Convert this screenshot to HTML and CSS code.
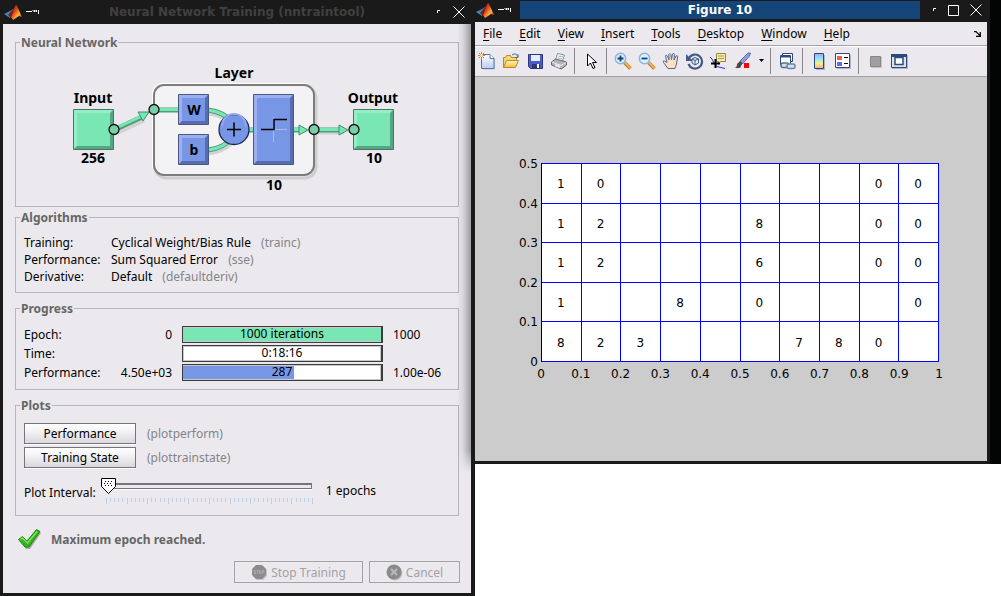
FILE: index.html
```html
<!DOCTYPE html>
<html lang="en">
<head>
<meta charset="utf-8">
<title>Neural Network Training (nntraintool)</title>
<link rel="stylesheet" href="styles.css">
</head>
<body>
<svg class="defs" aria-hidden="true">
  <defs>
    <linearGradient id="flame" x1="0" y1="0" x2="1" y2="1"><stop offset="0" stop-color="#6b1c10"/><stop offset=".4" stop-color="#e0481c"/><stop offset=".65" stop-color="#f9b233"/><stop offset="1" stop-color="#a8240e"/></linearGradient>
    <linearGradient id="cool" x1="0" y1="0" x2="0" y2="1"><stop offset="0" stop-color="#fff"/><stop offset="1" stop-color="#b9cdec"/></linearGradient>
    <linearGradient id="rainbow" x1="0" y1="0" x2="0" y2="1"><stop offset="0" stop-color="#a6a4f4"/><stop offset=".35" stop-color="#8fe6f4"/><stop offset=".65" stop-color="#f3f08c"/><stop offset="1" stop-color="#f6a98e"/></linearGradient>
    <linearGradient id="gold" x1="0" y1="0" x2="0" y2="1"><stop offset="0" stop-color="#fff6bd"/><stop offset="1" stop-color="#f0bd3c"/></linearGradient>
    <symbol id="matlab" viewBox="0 0 20 20">
      <path d="M1 12 7 9l3-2 1 3-4 6z" fill="#3f87c2"/>
      <path d="M5 13 10 7 13 3l-3 9-2 4z" fill="#7c2013"/>
      <path d="M13 3c1 0 3 6 6 12l-3-1-3 2-3 2-2-3c2-2 3-10 5-12z" fill="url(#flame)"/>
    </symbol>
    <symbol id="pin" viewBox="0 0 14 8"><path d="M0 3.500h6M6.500 2l2 2v-2l2 2v-2M12.500 2v4" fill="none" stroke="#fff"/></symbol>
    <symbol id="corner" viewBox="0 0 4 4"><path d="M.5 3V.5H3" fill="none" stroke="#fff"/></symbol>
    <symbol id="cross" viewBox="0 0 12 12"><path d="m.5.5 11 11m0-11-11 11" fill="none" stroke="#fff"/></symbol>
  </defs>
</svg>

<div class="desktop">
  <section class="window trainer" aria-label="Neural Network Training">
    <header class="titlebar">
      <div class="title-side"><svg width="20" height="20"><use href="#matlab"/></svg><svg width="14" height="8"><use href="#pin"/></svg></div>
      <h1>Neural Network Training (nntraintool)</h1>
      <div class="title-side end">
        <button type="button" aria-label="Minimize"><svg width="4" height="4"><use href="#corner"/></svg></button>
        <button type="button" aria-label="Close"><svg width="12" height="12"><use href="#cross"/></svg></button>
      </div>
    </header>
    <main class="trainer-body">
      <fieldset class="network">
        <legend>Neural Network</legend>
        <svg class="diagram" viewBox="65 60 344 136" width="344" height="136" role="img" aria-label="Network diagram">
          <rect x="155" y="87" width="161" height="91" rx="11" fill="none" stroke="#cfcdd0" stroke-width="3"/>
          <rect x="154" y="85" width="160" height="90" rx="10" fill="#f3f3f5" stroke="#7c7c7c" stroke-width="2"/>
          <path d="M152.500 168V93q1-8 9-9.500h146" fill="none" stroke="#fff"/>
          <g fill="none" stroke="#d5d2d6" stroke-width="5">
            <path d="m116 133 28-13M316 132h28M209 113q14 2 22 10M209 153q14-2 22-10"/>
          </g>
          <g fill="none" stroke="#4f9f7d" stroke-width="5">
            <path d="m114 130 28-13M154 110h26M208 110q16 2 24 12M208 150q16-2 24-12M248 130h6M294 130h7M314 130h28"/>
          </g>
          <g fill="none" stroke="#79e6b3" stroke-width="3">
            <path d="m114 129 28-13M154 109.500h26M208 110q16 2 24 12M208 150q16-2 24-12M248 129.500h6M294 129.500h7M314 129.500h28"/>
          </g>
          <g fill="#79e6b3" stroke="#3f8f6d"><path d="m138 112 11 0-6 9zM299 125l9 5-9 5zM339 125l9 5-9 5z"/></g>
          <g>
            <path d="M73.500 109.500h40v40h-40z" fill="#79e6b3" stroke="#4a7564"/>
            <path d="M74 110h39l-3 3H77v33l-3 3z" fill="#94efc6"/><path d="M113 110v39H74l3-3h33v-33z" fill="#55a783"/>
            <path d="M353.500 109.500h40v40h-40z" fill="#79e6b3" stroke="#4a7564"/>
            <path d="M354 110h39l-3 3h-33v33l-3 3z" fill="#94efc6"/><path d="M393 110v39h-39l3-3h33v-33z" fill="#55a783"/>
          </g>
          <g>
            <path d="M178.500 94.500h30v30h-30zM178.500 134.500h30v30h-30zM253.500 94.500h40v70h-40z" fill="#7896e6" stroke="#4a5880"/>
            <path d="M179 95h29l-3 3h-23v23l-3 3zM179 135h29l-3 3h-23v23l-3 3zM254 95h39l-3 3h-33v63l-3 3z" fill="#9ab0f0"/>
            <path d="M208 95v29h-29l3-3h23V98zM208 135v29h-29l3-3h23v-23zM293 95v69h-39l3-3h33V98z" fill="#566dae"/>
            <circle cx="234" cy="129.500" r="15" fill="#7896e6" stroke="#182850" stroke-width="1.300"/>
            <path d="M222 126a12 12 0 0 1 24 0" fill="none" stroke="#93abf0" stroke-width="2"/>
            <path d="M227 129.500h14M234 122.500v14" stroke="#000" stroke-width="1.500"/>
            <path d="M273.500 117v25M262 129.500h25" stroke="#a9bbf3"/>
            <path d="M261 129.500h13v-10h13" fill="none" stroke="#000" stroke-width="1.500"/>
          </g>
          <g fill="#79cfa6" stroke="#111" stroke-width="1.300"><circle cx="114" cy="129.500" r="5"/><circle cx="154" cy="109.500" r="5"/><circle cx="314" cy="129.500" r="5"/><circle cx="354" cy="129.500" r="5"/></g>
          <g class="diagram-text">
            <text x="93" y="103">Input</text><text x="234" y="78">Layer</text><text x="373" y="103">Output</text>
            <text x="194" y="115">W</text><text x="194" y="155">b</text>
            <text x="93" y="163">256</text><text x="374" y="163">10</text><text x="274" y="190">10</text>
          </g>
        </svg>
      </fieldset>

      <fieldset class="algorithms">
        <legend>Algorithms</legend>
        <dl>
          <dt>Training:</dt><dd>Cyclical Weight/Bias Rule <span class="hint">(trainc)</span></dd>
          <dt>Performance:</dt><dd>Sum Squared Error <span class="hint">(sse)</span></dd>
          <dt>Derivative:</dt><dd>Default <span class="hint">(defaultderiv)</span></dd>
        </dl>
      </fieldset>

      <fieldset class="progress">
        <legend>Progress</legend>
        <div class="meter-row"><span id="m1">Epoch:</span><span class="from">0</span>
          <div class="meter" role="progressbar" aria-labelledby="m1" aria-valuenow="100"><div class="fill green" style="width:100%"></div><span>1000 iterations</span></div><span>1000</span></div>
        <div class="meter-row"><span id="m2">Time:</span><span class="from"></span>
          <div class="meter" role="progressbar" aria-labelledby="m2"><span>0:18:16</span></div><span></span></div>
        <div class="meter-row"><span id="m3">Performance:</span><span class="from">4.50e+03</span>
          <div class="meter" role="progressbar" aria-labelledby="m3" aria-valuenow="56"><div class="fill blue" style="width:56%"></div><span>287</span></div><span>1.00e-06</span></div>
      </fieldset>

      <fieldset class="plots">
        <legend>Plots</legend>
        <div class="plot-row"><button type="button" class="push">Performance</button><span class="hint">(plotperform)</span></div>
        <div class="plot-row"><button type="button" class="push">Training State</button><span class="hint">(plottrainstate)</span></div>
        <div class="interval">
          <label for="interval">Plot Interval:</label>
          <div class="slider">
            <input id="interval" type="range" min="1" max="100" value="1">
            <svg class="ticks" viewBox="0 0 207 6" height="6" preserveAspectRatio="none" aria-hidden="true"><path d="M0 2h207" stroke-width="4" stroke-dasharray="1 3.120"/><path d="M0 3h207" stroke-width="6" stroke-dasharray="1 19.600"/></svg>
          </div>
          <output for="interval">1 epochs</output>
        </div>
      </fieldset>

      <p class="status">
        <svg width="26" height="22" viewBox="0 0 26 22" aria-hidden="true"><path d="m3 13 3-3 5 5L21 3l3 2-11 16H9z" fill="#aaa8ac"/><path d="m1.500 11.500 4-3 4.500 4.500L19.500 1.500l3.500 2L12 19H8z" fill="#2fb51d" stroke="#1b8a12"/><path d="m3.500 11.500 2-1.500 5 5L20 3.500" fill="none" stroke="#85e060" stroke-width="1.500"/></svg>
        Maximum epoch reached.
      </p>
      <div class="actions">
        <button type="button" class="ghost stop" disabled>
          <svg width="17" height="17" viewBox="0 0 17 17" aria-hidden="true"><path d="M6 2h6l4 4v6l-4 4H6l-4-4V6z" fill="#c4c2c6"/><path d="M5 1h6l4 4v6l-4 4H5l-4-4V5z" fill="#8c8c8c"/><path d="M4.500 6.500h-1.500v1.500h1.500v1.500H3M5.500 6.500h2M6.500 6.500v3.500M8.500 6.500h1.500v3h-1.500zM11.500 10V6.500H13V8h-1.500" fill="none" stroke="#a9a9a9"/></svg>
          Stop Training</button>
        <button type="button" class="ghost cancel" disabled>
          <svg width="17" height="17" viewBox="0 0 17 17" aria-hidden="true"><circle cx="9" cy="9" r="7.500" fill="#c4c2c6"/><circle cx="8" cy="8" r="7.500" fill="#8a8a8a"/><path d="m5 5 6 6m0-6-6 6" stroke="#b9b9b9" stroke-width="2"/></svg>
          Cancel</button>
      </div>
    </main>
  </section>

  <div class="backdrop">
    <section class="window figure-window" aria-label="Figure 10">
      <header class="titlebar active">
        <div class="title-side"><svg width="20" height="20"><use href="#matlab"/></svg><svg width="14" height="8"><use href="#pin"/></svg></div>
        <h2>Figure 10</h2>
        <div class="title-side end">
          <button type="button" aria-label="Minimize"><svg width="4" height="4"><use href="#corner"/></svg></button>
          <button type="button" aria-label="Maximize"><svg width="11" height="11"><path d="M.5.5h10v10H.5z" fill="none" stroke="#fff"/></svg></button>
          <button type="button" aria-label="Close"><svg width="12" height="12"><use href="#cross"/></svg></button>
        </div>
      </header>
      <nav class="menubar">
        <button type="button"><u>F</u>ile</button><button type="button"><u>E</u>dit</button><button type="button"><u>V</u>iew</button><button type="button"><u>I</u>nsert</button><button type="button"><u>T</u>ools</button><button type="button"><u>D</u>esktop</button><button type="button"><u>W</u>indow</button><button type="button"><u>H</u>elp</button>
        <svg class="dock" width="7" height="6" viewBox="0 0 7 6" aria-hidden="true"><path d="M0 .7h2l4 4M2 5.300h5M6.300 1v5" fill="none" stroke="#000" stroke-width="1.200"/></svg>
      </nav>
      <div class="toolbar" role="toolbar">
        <button type="button" aria-label="New"><svg viewBox="0 0 18 18"><path d="M5.500 3.500H13l4 4v10H5z" fill="#b8c4dc"/><path d="M3.500 2.500H12l4 4v10H3.500z" fill="url(#cool)" stroke="#5876a8"/><path d="M12 2.500v4h4" fill="#fff" stroke="#5876a8"/><path d="M3.500 0v7M0 3.500h7M1 1l5 5M6 1 1 6" stroke="#e8753a"/><circle cx="3.500" cy="3.500" r="1.500" fill="#fbe6a0"/></svg></button>
        <button type="button" aria-label="Open"><svg viewBox="0 0 18 18"><path d="M1.500 15.500v-10h2l1-2h4l1 2h5v3" fill="#f5d67a" stroke="#b98a28"/><path d="m1.500 15.500 3-7h12l-3 7z" fill="url(#gold)" stroke="#b98a28"/><path d="M10 3q4-3 6 2m0-3v3.500h-3" fill="none" stroke="#456ca0"/></svg></button>
        <button type="button" aria-label="Save"><svg viewBox="0 0 18 18"><path d="M2.500 2.500h14v14h-12l-2-2z" fill="#4c5cc4" stroke="#2c357f"/><path d="M5 3h9v6H5z" fill="#e6ecfa"/><path d="M6 12h8v4H6z" fill="#30386f"/><path d="M11 12h2v4h-2z" fill="#fff"/></svg></button>
        <button type="button" aria-label="Print"><svg viewBox="0 0 18 18"><path d="m5.500 8 2-6.500 7 1.500-2 6" fill="#fff" stroke="#8590a0"/><path d="m8 4 5 1M7.500 6l5 1" stroke="#9db0cc"/><path d="m1.500 10 4-3 11 3v3l-5 4-10-4z" fill="#b2b2b4" stroke="#67676b"/><path d="m2 10 9 3.500 5-3" fill="none" stroke="#efefef"/><path d="m5 13 5 2" stroke="#eee" stroke-width="2"/></svg></button>
        <span class="sep"></span>
        <button type="button" aria-label="Select"><svg viewBox="0 0 18 18"><path d="M5.500 2v12l3-3 2.500 5.500 2-1-2.500-5h4z" fill="#fff" stroke="#000"/></svg></button>
        <span class="sep"></span>
        <button type="button" aria-label="Zoom in"><svg viewBox="0 0 18 18"><path d="m10.500 10.500 6 6" stroke="#b87524" stroke-width="3.500"/><path d="m10.500 10 6 6" stroke="#f4b661" stroke-width="1.800"/><circle cx="6.500" cy="6.500" r="5.200" fill="#d7f2fb" stroke="#8fb4d6" stroke-width="1.500"/><path d="M3.500 6.500h6M6.500 3.500v6" stroke="#123e82" stroke-width="1.800"/></svg></button>
        <button type="button" aria-label="Zoom out"><svg viewBox="0 0 18 18"><path d="m10.500 10.500 6 6" stroke="#b87524" stroke-width="3.500"/><path d="m10.500 10 6 6" stroke="#f4b661" stroke-width="1.800"/><circle cx="6.500" cy="6.500" r="5.200" fill="#d7f2fb" stroke="#8fb4d6" stroke-width="1.500"/><path d="M3.500 6.500h6" stroke="#123e82" stroke-width="1.800"/></svg></button>
        <button type="button" aria-label="Pan"><svg viewBox="0 0 18 18"><path d="m6 16.500-4.500-6q-1-2 1-1.500L5 10.500 3.500 4q.5-2 2 0L7 8 6.800 2.500q1-2 2 0l.7 5L10.500 2q1.500-1.500 2 .5L12 8l2-4q1.500-1 1.700.7L14.500 12 13 16.500z" fill="#fde0bf" stroke="#50679c"/></svg></button>
        <button type="button" aria-label="Rotate"><svg viewBox="0 0 18 18"><path d="M3 6a7 7 0 1 1-.5 6" fill="none" stroke="#435a88" stroke-width="2.200"/><path d="M0 2v7h7z" fill="#435a88"/><path d="m6 7 3-1.500L12.500 7v4L9 13l-3-2zM6 7l3 1.500L12.500 7M9 8.500V13" fill="#e6edf8" stroke="#435a88"/></svg></button>
        <button type="button" aria-label="Data cursor"><svg viewBox="0 0 18 18"><path d="M6.500 1.500h9v8h-5l-2 3v-3h-2z" fill="#f6eca0" stroke="#8f8650"/><path d="M8 4h6M8 6.500h6" stroke="#a49b62"/><path d="M0 5q2 1 4 6t5 4l6 1.500" fill="none" stroke="#2635f0"/><path d="M1 11.500h9M5.500 7v9" stroke="#000" stroke-width="2"/></svg></button>
        <button type="button" aria-label="Brush"><svg viewBox="0 0 18 18"><path d="m6 9 8-8 2.500 0-1 3-7 8z" fill="#8f9ce0" stroke="#4a55a0" stroke-width=".8"/><path d="M0 16q3 0 3-4l3-3 2.500 2.500L6 16z" fill="#4b4b4b"/><path d="M10 11h5v5h-5z" fill="#f00"/></svg></button>
        <button type="button" class="drop" aria-label="Brush options"><svg viewBox="0 0 5 3"><path d="M0 0h5L2.500 3z"/></svg></button>
        <span class="sep"></span>
        <button type="button" aria-label="Link plot"><svg viewBox="0 0 18 18"><path d="M4.500 1.500h10v8h-10z" fill="#fff" stroke="#2c4a80"/><path d="M2.500 3.500h10v9h-10z" fill="#fff" stroke="#2c4a80"/><path d="M3 4.500h9" stroke="#2c4a80" stroke-width="2"/><rect x="3" y="11" width="8" height="4.500" rx="2" fill="#d6e0ea" stroke="#52718f" stroke-width="1.500"/><rect x="9" y="12" width="8" height="4.500" rx="2" fill="#d6e0ea" stroke="#6c88a4" stroke-width="1.500"/></svg></button>
        <span class="sep"></span>
        <button type="button" aria-label="Insert colorbar"><svg viewBox="0 0 18 18"><path d="M6 3h9v15H6z" fill="#adb5cb"/><path d="M4.500 1.500h9v15h-9z" fill="url(#rainbow)" stroke="#2c4a80"/></svg></button>
        <button type="button" aria-label="Insert legend"><svg viewBox="0 0 18 18"><path d="M3 3h14v14H3z" fill="#adb5cb"/><path d="M1.500 1.500h14v14h-14z" fill="#fff" stroke="#2c4a80"/><path d="M3 4h5v4H3z" fill="#e66262"/><path d="M3 10h5v4H3z" fill="#6666ea"/><path d="M10 5.500h4M10 11.500h4" stroke="#000"/></svg></button>
        <span class="sep"></span>
        <button type="button" aria-label="Hide plot tools" disabled><svg viewBox="0 0 18 18"><path d="M5 5h11v11H5z" fill="#c8c6ca"/><path d="M4.500 4.500h10v10h-10z" fill="#a0a0a0" stroke="#868686"/></svg></button>
        <button type="button" aria-label="Show plot tools"><svg viewBox="0 0 18 18"><path d="M2 3h16v14H2z" fill="#adb5cb"/><path d="M1.500 2.500h15v13h-15z" fill="#dfe3dc" stroke="#2c4a80"/><path d="M1 3.500h16" stroke="#2c4a80" stroke-width="3"/><path d="M5 5.500h8v7H5z" fill="#fff" stroke="#2c4a80" stroke-width="1.500"/></svg></button>
      </div>
      <div class="canvas">
        <div class="y-axis"><span>0.5</span><span>0.4</span><span>0.3</span><span>0.2</span><span>0.1</span><span>0</span></div>
        <div class="cells">
          <span>1</span><span>0</span><span></span><span></span><span></span><span></span><span></span><span></span><span>0</span><span>0</span>
          <span>1</span><span>2</span><span></span><span></span><span></span><span>8</span><span></span><span></span><span>0</span><span>0</span>
          <span>1</span><span>2</span><span></span><span></span><span></span><span>6</span><span></span><span></span><span>0</span><span>0</span>
          <span>1</span><span></span><span></span><span>8</span><span></span><span>0</span><span></span><span></span><span></span><span>0</span>
          <span>8</span><span>2</span><span>3</span><span></span><span></span><span></span><span>7</span><span>8</span><span>0</span><span></span>
        </div>
        <div class="x-axis"><span>0</span><span>0.1</span><span>0.2</span><span>0.3</span><span>0.4</span><span>0.5</span><span>0.6</span><span>0.7</span><span>0.8</span><span>0.9</span><span>1</span></div>
      </div>
    </section>
  </div>
</div>
</body>
</html>
```
FILE: styles.css
```css
* { box-sizing: border-box; }

body {
  margin: 0;
  background: #fff;
  color: #000;
  font: 12px/17px "Noto Sans", sans-serif;
}

button { font: inherit; color: inherit; margin: 0; padding: 0; border: 0; background: none; }
svg { display: block; flex: none; }
h1, h2, p, dl, dd { margin: 0; }
.defs { position: absolute; width: 0; height: 0; }

.desktop {
  display: grid;
  grid-template-columns: 475fr 526fr;
  min-height: 100vh;
}

.window { display: flex; flex-direction: column; background: #ebe9ed; }

/* Title bars */
.titlebar {
  display: flex;
  align-items: center;
  height: 24px;
  background: #1a1a1a;
  color: #404040;
}
.titlebar h1, .titlebar h2 {
  flex: 1;
  text-align: center;
  font: bold 12px/18px "DejaVu Sans", sans-serif;
}
.title-side { display: flex; align-items: center; gap: 3px; width: 45px; }
.title-side.end { justify-content: flex-end; gap: 12px; padding-right: 6px; }
.titlebar.active { height: 22px; padding-bottom: 2px; }
.titlebar.active .end { width: 67px; padding-right: 5px; gap: 11px; }
.titlebar.active h2 { background: #154578; color: #fff; }

/* Training window */
.trainer { border: solid #1a1a1a; border-width: 0 4px 3px 3px; }
.trainer-body {
  position: relative;
  flex: 1;
  display: flex;
  flex-direction: column;
  padding: 10px 12px;
}
.trainer-body::after {
  content: "";
  position: absolute;
  top: 0;
  right: 0;
  width: 14px;
  height: 448px;
  background: linear-gradient(to right, transparent, #0001 40%, #0005);
  mask-image: linear-gradient(#000 95%, transparent);
  pointer-events: none;
}

fieldset { min-width: 0; margin: 0; padding: 8px 8px 7px; border: 1px solid #b8b6ba; }
legend {
  margin-left: -4px;
  padding: 0 1px;
  color: #666;
  font-weight: bold;
  line-height: 17px;
}
.network { padding: 9px 8px 10px; }
.algorithms { margin-top: 2px; }
.progress, .plots { margin-top: 7px; }
.plots { padding: 9px 8px 6px; }
.diagram { margin: 0 auto; }
.diagram-text { font-size: 14px; font-weight: bold; text-anchor: middle; }
.hint { color: #858388; }

.algorithms dl { display: grid; grid-template-columns: 87px 1fr; }
.algorithms .hint { margin-left: 7px; }

.meter-row {
  display: grid;
  grid-template-columns: 87px 61px 1fr 57px;
  align-items: center;
  height: 19px;
}
.from { text-align: right; }
.meter {
  position: relative;
  height: 17px;
  margin: 0 10px;
  border: solid #3c3c3e;
  border-width: 1px 2px 1px 1px;
  background: #fff;
  box-shadow: inset 0 0 0 1px #c9c9c9;
  text-align: center;
  line-height: 14px;
}
.fill { position: absolute; inset: 1px auto 1px 0; }
.green { background: #79e6b3; }
.blue { background: #7896e6; }
.meter span { position: relative; }

.plot-row { display: flex; align-items: center; gap: 11px; margin-bottom: 3px; }
.push {
  width: 112px;
  height: 21px;
  border: 1px solid #77757a;
  background: linear-gradient(#fff, #f2f1f4 40%, #d9d8dc);
  box-shadow: 0 1px #fff;
  line-height: 18px;
}
.interval { display: flex; align-items: center; height: 38px; }
.interval label { padding-top: 4px; }
.slider { flex: 0 1 216px; margin: 2px 9px 0 5px; }
.slider input {
  display: block;
  width: 100%;
  height: 16px;
  margin: 0;
  appearance: none;
  background: none;
}
.slider input::-webkit-slider-runnable-track {
  height: 6px;
  margin: 0 5px;
  border: solid #77757a;
  border-width: 2px 1px 1px;
  box-shadow: 0 1px #fff;
}
.slider input::-webkit-slider-thumb {
  appearance: none;
  width: 15px;
  height: 16px;
  margin: -7px 0 0 -6px;
  background: url("data:image/svg+xml,%3Csvg xmlns='http://www.w3.org/2000/svg' width='15' height='16'%3E%3Cpath d='M.5.5h14v8l-7 7-7-7z' fill='%23fff' stroke='%23000'/%3E%3Cpath d='M4 3.500h8M3 5.500h8M4 7.500h8' stroke='%23000' stroke-dasharray='1 2'/%3E%3C/svg%3E") no-repeat;
}
.ticks { width: calc(100% - 9px); margin: 4px 0 0 5px; stroke: #bccfe6; shape-rendering: crispEdges; }

.status {
  display: flex;
  align-items: center;
  gap: 8px;
  margin: 12px 0 11px 2px;
  color: #666;
  font-weight: bold;
}
.actions { display: flex; justify-content: flex-end; gap: 6px; margin-right: -1px; }
.ghost {
  display: flex;
  align-items: center;
  justify-content: center;
  gap: 3px;
  height: 22px;
  border: 1px solid #a5a3a8;
  color: #a3a1a6;
}
.stop { width: 129px; }
.cancel { width: 91px; }

/* Figure window */
.backdrop { align-self: start; padding-right: 11px; background: #030504; }
.figure-window { border: solid #1a1a1a; border-width: 0 3px 3px 0; }
.menubar {
  display: flex;
  align-items: center;
  gap: 1px;
  height: 24px;
  padding: 0 6px 0 0;
  border-bottom: 1px solid #a3a1a6;
}
.menubar button { padding: 0 8px 0 7px; }
.menubar button:first-child { padding-left: 8px; }
.menubar button + button { padding-left: 8px; }
.menubar u { text-underline-offset: 2px; }
.dock { margin-left: auto; }
.toolbar {
  display: flex;
  align-items: center;
  height: 31px;
  padding-bottom: 2px;
  border-top: 1px solid #fff;
  border-bottom: 1px solid #a3a1a6;
}
.toolbar button { display: grid; place-items: center; width: 24px; height: 26px; }
.toolbar svg { width: 18px; height: 18px; fill: none; }
.toolbar .drop { width: 12px; }
.toolbar .drop svg { width: 5px; height: 3px; fill: #000; }
.sep { flex: none; width: 1px; height: 26px; margin: 0 4px 0 3px; background: #88868b; }

.canvas {
  display: grid;
  grid-template-columns: 66px 1fr;
  padding: 86px 48px 80px 0;
  background: #ccc;
  font: 12px/14px "DejaVu Sans", sans-serif;
}
.cells {
  display: grid;
  grid-template-columns: repeat(10, 1fr);
  grid-template-rows: repeat(5, 1fr);
  gap: 1px;
  aspect-ratio: 2 / 1;
  padding: 1px 1px 1px 0;
  background: #00f;
  border-left: 1px solid #000;
}
.cells span {
  display: grid;
  place-items: center;
  min-width: 0;
  min-height: 0;
  padding: 2px 1px 0 0;
  background: #fff;
}
.y-axis {
  display: flex;
  flex-direction: column;
  justify-content: space-between;
  margin: -6px 3px -7px 0;
  text-align: right;
}
.x-axis { grid-column: 2; display: flex; justify-content: space-between; margin-top: 5px; }
.x-axis span { display: flex; justify-content: center; width: 0; }
```
